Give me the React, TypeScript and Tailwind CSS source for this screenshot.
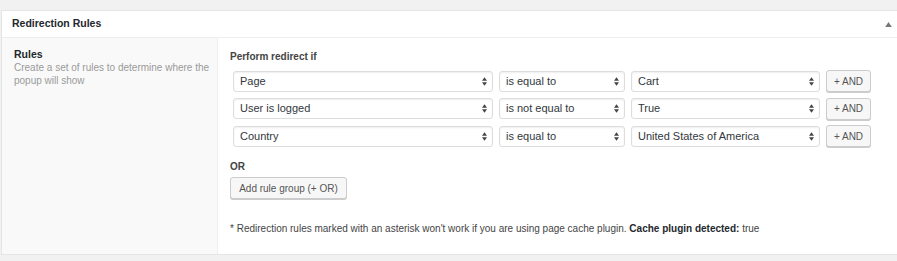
import React from "react";

const font = { fontFamily: '"Liberation Sans", Arial, sans-serif' };

function Select({ value, w }: { value: string; w: string }) {
  return (
    <div
      className={`${w} h-[21px] flex items-center justify-between bg-white border border-[#ddd] rounded-[3px] shadow-[inset_0_1px_2px_rgba(0,0,0,0.07)] pl-[6px] pr-[5px] text-[11px] text-[#32373c]`}
    >
      <span>{value}</span>
      <svg width="5" height="9" viewBox="0 0 6 10">
        <path d="M3 0 L6 4 L0 4 Z" fill="#444" />
        <path d="M0 6 L6 6 L3 10 Z" fill="#444" />
      </svg>
    </div>
  );
}

function AndButton() {
  return (
    <button className="w-[45px] h-[22px] bg-[#f7f7f7] border border-[#ccc] rounded-[3px] shadow-[0_1px_0_#ccc] text-[10px] text-[#555]">
      + AND
    </button>
  );
}

const rows = [
  ["Page", "is equal to", "Cart"],
  ["User is logged", "is not equal to", "True"],
  ["Country", "is equal to", "United States of America"],
];

export default function App() {
  return (
    <div className="w-[897px] h-[261px] bg-[#f1f1f1] pt-[10px] pl-[1px]" style={font}>
      <div className="bg-white border border-[#e5e5e5] border-r-0 h-[245px] flex flex-col">
        <div className="h-[27px] flex items-center justify-between pl-[10px] pr-[5px] border-b border-[#eee]">
          <span className="text-[10.5px] font-bold text-[#23282d]">Redirection Rules</span>
          <svg width="7" height="5" viewBox="0 0 8 6">
            <path d="M4 0 L8 6 L0 6 Z" fill="#777" />
          </svg>
        </div>
        <div className="flex flex-1">
          <div className="w-[216px] bg-[#f9f9f9] border-r border-[#eee] pl-[12px] pr-[2px] pt-[10px]">
            <div className="text-[10.5px] font-bold text-[#23282d] leading-[12px]">Rules</div>
            <div className="text-[10px] text-[#999] leading-[13px] mt-[1px]">
              Create a set of rules to determine where the popup will show
            </div>
          </div>
          <div className="flex-1 pl-[12px] pt-[13px]">
            <div className="text-[10px] font-bold text-[#444] leading-[12px] mb-[7px]">Perform redirect if</div>
            <div className="flex flex-col gap-[5.5px] pl-[3px]">
              {rows.map((r, i) => (
                <div key={i} className="flex items-center gap-[6px]">
                  <Select value={r[0]} w="w-[260px]" />
                  <Select value={r[1]} w="w-[126px]" />
                  <Select value={r[2]} w="w-[189px]" />
                  <AndButton />
                </div>
              ))}
            </div>
            <div className="text-[10px] font-bold text-[#444] mt-[14px] leading-[12px]">OR</div>
            <button className="mt-[4px] h-[22px] w-[117px] bg-[#f7f7f7] border border-[#ccc] rounded-[3px] shadow-[0_1px_0_#ccc] text-[10px] text-[#555]">
              Add rule group (+ OR)
            </button>
            <div className="mt-[24px] text-[10px] leading-[12px] text-[#444]">
              * Redirection rules marked with an asterisk won't work if you are using page cache plugin.{" "}
              <b className="text-[#23282d]">Cache plugin detected:</b> true
            </div>
          </div>
        </div>
      </div>
    </div>
  );
}
